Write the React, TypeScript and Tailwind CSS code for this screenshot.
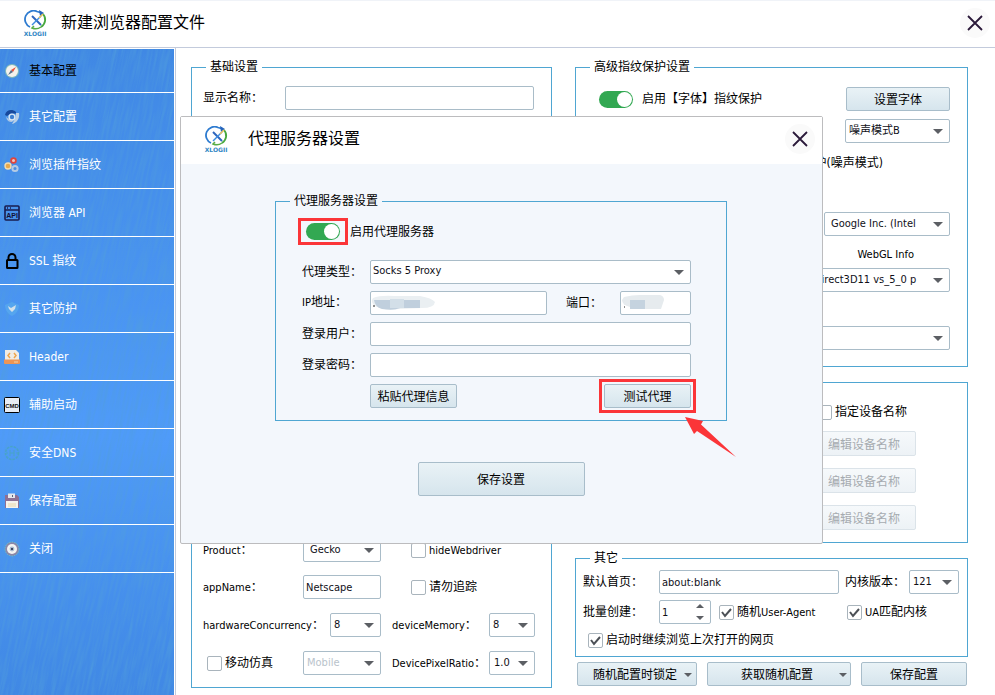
import type { ReactNode } from 'react';

const MENU = [
  { label: '基本配置', icon: 'compass' },
  { label: '其它配置', icon: 'browser' },
  { label: '浏览插件指纹', icon: 'gears' },
  { label: '浏览器 API', icon: 'api' },
  { label: 'SSL 指纹', icon: 'lock' },
  { label: '其它防护', icon: 'shield' },
  { label: 'Header', icon: 'header' },
  { label: '辅助启动', icon: 'cmd' },
  { label: '安全DNS', icon: 'dns' },
  { label: '保存配置', icon: 'floppy' },
  { label: '关闭', icon: 'close' },
];

function MenuIcon({ name }: { name: string }) {
  return (
    <svg viewBox="0 0 16 16" className="w-4 h-4 shrink-0" aria-hidden="true">
      {name === 'compass' && (
        <>
          <circle cx="8" cy="8" r="7" fill="#7fb9bd" />
          <circle cx="8" cy="8" r="6" fill="#f4f2ec" />
          <path d="M12 4L9 9L7 7z" fill="#e8503a" />
          <path d="M4 12L7 7L9 9z" fill="#56708c" />
        </>
      )}
      {name === 'browser' && (
        <>
          <path d="M1 6C2 1 8 -0.5 12 3L12 4.500H7L3 7z" fill="#17489c" />
          <path d="M12 4H15C16 9 13 14 8 15L11.500 9z" fill="#b9cfe6" />
          <path d="M2 8C3 12 5 13 8 13L10 11L5 10z" fill="#a9c4e4" />
          <circle cx="8" cy="8" r="3.600" fill="#dbe8f5" />
          <circle cx="8" cy="8" r="2.200" fill="#3d7fd2" />
        </>
      )}
      {name === 'gears' && (
        <>
          <circle cx="9.500" cy="3.500" r="2.400" fill="#f0c8c0" stroke="#e0453c" strokeWidth="1.800" />
          <circle cx="4" cy="9" r="3" fill="#e7a94c" stroke="#f4dcae" strokeWidth="1.400" />
          <circle cx="11" cy="11.500" r="2.600" fill="#4a8ce0" stroke="#b4cbe4" strokeWidth="2" />
        </>
      )}
      {name === 'api' && (
        <>
          <rect x="1" y="1" width="14" height="14" rx="1" fill="none" stroke="#191c4e" strokeWidth="1.600" />
          <path d="M1 5H15M3 3H4M6 3H7" stroke="#191c4e" strokeWidth="1.300" />
          <text x="8" y="13" textAnchor="middle" fontSize="7" fontWeight="700" fill="#120f34" fontFamily="Liberation Sans, sans-serif">API</text>
        </>
      )}
      {name === 'lock' && (
        <>
          <path d="M4.500 7V4.500a3.500 3.500 0 0 1 7 0V7" fill="none" stroke="#000" strokeWidth="2" />
          <rect x="3" y="7" width="10.500" height="8" rx="0.500" fill="none" stroke="#000" strokeWidth="2" />
        </>
      )}
      {name === 'shield' && (
        <>
          <path d="M8 1L15 4C15 9 12 13 8 15C4 13 1 9 1 4z" fill="#55a5ee" />
          <path d="M4 5L7 7L12 4L11 8L8 11L5 8z" fill="#d4e1ea" />
        </>
      )}
      {name === 'header' && (
        <>
          <path d="M1 1H12L15 4V12H1z" fill="#efece6" />
          <path d="M0 10.500H16V14a1 1 0 0 1-1 1H1a1 1 0 0 1-1-1z" fill="#ec9555" />
          <path d="M6 4L4 6.500L6 9M10 4L12 6.500L10 9" fill="none" stroke="#eea54c" strokeWidth="1.500" />
          <path d="M10 13H14" stroke="#f5d4a4" />
        </>
      )}
      {name === 'cmd' && (
        <>
          <rect x="0.500" y="0.500" width="15" height="15" rx="1" fill="#e8edf5" stroke="#000" />
          <text x="8" y="10.500" textAnchor="middle" fontSize="6" fontWeight="700" fill="#111" fontFamily="Liberation Sans, sans-serif">CMD</text>
        </>
      )}
      {name === 'dns' && (
        <>
          <circle cx="8" cy="8" r="6.500" fill="none" stroke="#48a3c8" strokeWidth="1.600" strokeDasharray="2.500 1" />
          <path d="M6 5V11M10 5V11M6 8H10M2 8H4M12 8H14" stroke="#48a3c8" />
        </>
      )}
      {name === 'floppy' && (
        <>
          <path d="M1 2H13L15 4V15H1z" fill="#8d7093" />
          <path d="M4 0.500H11V5H4z" fill="#e4e7ec" />
          <path d="M8 2H9V4H8z" fill="#59617a" />
          <path d="M2 8H14V15H2z" fill="#f5f3ee" />
          <path d="M4 11H12M4 13H12" stroke="#ecd9a8" />
        </>
      )}
      {name === 'close' && (
        <>
          <circle cx="8" cy="8" r="7" fill="#8b86a8" stroke="#6fc0c4" strokeDasharray="1.500 1" />
          <circle cx="8" cy="8" r="5" fill="#f4f4f2" />
          <circle cx="8" cy="8" r="2.400" fill="#a9b9cf" />
          <path d="M7 7L9 9M9 7L7 9" stroke="#3e4960" />
        </>
      )}
    </svg>
  );
}

function Logo() {
  return (
    <svg viewBox="-1 0 24 27" className="w-6 h-[27px] shrink-0" aria-hidden="true">
      <path d="M6 17A8.500 8.500 0 0 1 13 1.500L18 3" fill="none" stroke="#2d7bd0" strokeWidth="1.800" />
      <path d="M15 0L20 3L16 6z" fill="#2464bd" />
      <path d="M19 4A8.500 8.500 0 0 1 17 17" fill="none" stroke="#47a83f" strokeWidth="1.800" />
      <path d="M17 17A9 9 0 0 1 8 18L10 16" fill="none" stroke="#58ad46" strokeWidth="1.500" />
      <path d="M8 6L17 15" stroke="#2f66bd" strokeWidth="2" />
      <path d="M17 6L8 15" stroke="#3d8ce0" strokeWidth="1.500" />
      <path d="M15 8L19 4" stroke="#ecc258" strokeWidth="1.500" />
      <text x="11" y="26" textAnchor="middle" fontSize="6" fontWeight="700" fill="#2f86c4" fontFamily="DejaVu Sans, sans-serif">XLOGII</text>
    </svg>
  );
}

function CloseButton({ label }: { label: string }) {
  return (
    <button type="button" aria-label={label} className="w-[30px] h-[30px] rounded-full bg-[#fafafa] flex items-center justify-center">
      <svg viewBox="0 0 16 16" className="w-4 h-4" aria-hidden="true">
        <path d="M1 1L15 15M15 1L1 15" stroke="#2b1a3a" strokeWidth="1.800" />
      </svg>
    </button>
  );
}

function Group({ title, className = '', children }: { title?: string; className?: string; children: ReactNode }) {
  return (
    <fieldset className={`border border-[#4fa6d2] min-w-0 ${className}`}>
      {title && <legend className="ml-3.5 px-1 h-5 leading-5">{title}</legend>}
      {children}
    </fieldset>
  );
}

function Arrow({ className = '' }: { className?: string }) {
  return (
    <svg viewBox="0 0 10 5" className={`pointer-events-none ${className}`} aria-hidden="true">
      <path d="M0 0H10L5 5z" fill="#5c5f64" />
    </svg>
  );
}

type SelectProps = { value: string; label?: string; id?: string; className?: string; pad?: string; disabled?: boolean };

function Select({ value, label, id, className = '', pad = 'pl-1', disabled }: SelectProps) {
  return (
    <div className={`relative shrink-0 ${className}`}>
      <select
        id={id}
        aria-label={label}
        disabled={disabled}
        className={`block appearance-none w-full h-6 ${pad} rounded-[2px] border border-[#a9bcc8] bg-white text-[11px] text-[#101018] disabled:text-[#b9c3cb] disabled:opacity-100`}
      >
        <option>{value}</option>
      </select>
      <Arrow className="absolute right-[7px] top-2.5 w-2.5 h-[5px]" />
    </div>
  );
}

function Input({ id, value = '', type = 'text', className = '' }: { id: string; value?: string; type?: string; className?: string }) {
  return (
    <input
      id={id}
      type={type}
      defaultValue={value}
      className={`h-6 min-w-0 px-[2px] rounded-[2px] border border-[#a9bcc8] bg-white text-[11px] text-[#101018] ${className}`}
    />
  );
}

function Check({ checked = false, children }: { checked?: boolean; children: ReactNode }) {
  return (
    <label className="flex items-center gap-[3px] whitespace-nowrap">
      <span className="relative w-[15px] h-[15px]">
        <input
          type="checkbox"
          defaultChecked={checked}
          className="peer block appearance-none w-[15px] h-[15px] rounded-[2px] border border-[#a9b4bc] bg-white"
        />
        <svg viewBox="0 0 15 15" className="hidden peer-checked:block absolute inset-0 pointer-events-none" aria-hidden="true">
          <path d="M3 7L6 11L12 4" fill="none" stroke="#4c5056" strokeWidth="2" />
        </svg>
      </span>
      <span>{children}</span>
    </label>
  );
}

function Toggle({ id }: { id: string }) {
  return (
    <span className="relative block w-[34px] h-[17px] shrink-0">
      <input id={id} type="checkbox" role="switch" defaultChecked className="peer block appearance-none w-full h-full rounded-full bg-[#a9b4bc] checked:bg-[#32a852]" />
      <span className="absolute top-px left-px peer-checked:left-[18px] w-[15px] h-[15px] rounded-full bg-white pointer-events-none" />
    </span>
  );
}

function PushButton({ className = '', disabled, children }: { className?: string; disabled?: boolean; children: ReactNode }) {
  return (
    <button
      type="button"
      disabled={disabled}
      className={`relative shrink-0 pt-0.5 rounded-[2px] border border-[#a8bdca] bg-linear-to-b from-[#e9f2f6] to-[#d6e5ed] disabled:border-[#dbe3e9] disabled:from-[#f6f9fb] disabled:to-[#edf2f6] disabled:text-[#a6abb0] ${className}`}
    >
      {children}
    </button>
  );
}

/* Latin words sit one step smaller than the Chinese around them */
const Latin = ({ children }: { children: ReactNode }) => <span className="text-[11px]">{children}</span>;

function Sidebar() {
  return (
    <aside className="relative w-[174px] shrink-0 bg-linear-to-b from-[#4088e4] via-[#4f9bf9] via-60% to-[#4088e4]">
      <svg className="absolute inset-0 w-full h-full" aria-hidden="true">
        <filter id="grain" x="0" y="0" width="100%" height="100%">
          <feTurbulence type="fractalNoise" baseFrequency="0.4 0.03" numOctaves="2" seed="4" />
          <feColorMatrix values="0 0 0 0 0.08  0 0 0 0 0.34  0 0 0 0 0.72  1.3 0 0 0 -0.5" />
        </filter>
        <g transform="rotate(12)">
          <rect x="-20" y="-60" width="420" height="900" filter="url(#grain)" />
        </g>
      </svg>
      <nav className="relative border-t border-white">
        {MENU.map((item, i) => (
          <a
            key={item.label}
            href="#"
            className={`flex items-center gap-[9px] pl-1 border-b border-white ${i === 0 ? 'h-11 text-black' : 'h-12 text-white'}`}
          >
            <MenuIcon name={item.icon} />
            <span>{item.label}</span>
          </a>
        ))}
      </nav>
    </aside>
  );
}

function BasicSettings() {
  return (
    <Group title="基础设置" className="flex flex-col">
      <div className="flex items-center h-8 mt-[5px] pl-[11px] pr-[17px]">
        <label htmlFor="name" className="w-[82px] shrink-0">显示名称：</label>
        <Input id="name" className="flex-1" />
      </div>
      <div className="mt-auto pl-[11px] pr-[17px] pb-[5px]">
        <div className="flex items-center h-9">
          <label htmlFor="product" className="w-[100px] shrink-0"><Latin>Product</Latin>：</label>
          <Select id="product" value="Gecko" className="w-[78px]" pad="pl-1.5" />
          <div className="ml-[30px]"><Check><Latin>hideWebdriver</Latin></Check></div>
        </div>
        <div className="flex items-center h-[38px]">
          <label htmlFor="app" className="w-[100px] shrink-0"><Latin>appName</Latin>：</label>
          <Input id="app" value="Netscape" className="w-[78px]" />
          <div className="ml-[30px]"><Check>请勿追踪</Check></div>
        </div>
        <div className="flex items-center h-[38px] whitespace-nowrap">
          <label htmlFor="hw" className="w-[127px] shrink-0"><Latin>hardwareConcurrency</Latin>：</label>
          <Select id="hw" value="8" className="w-[51px]" pad="pl-[3px]" />
          <label htmlFor="mem" className="ml-[11px] w-[97px] shrink-0"><Latin>deviceMemory</Latin>：</label>
          <Select id="mem" value="8" className="w-[46px]" pad="pl-[3px]" />
        </div>
        <div className="flex items-center h-[38px] whitespace-nowrap">
          <div className="w-[96px] ml-1 shrink-0"><Check>移动仿真</Check></div>
          <Select label="移动仿真" value="Mobile" className="w-[78px]" pad="pl-[3px]" disabled />
          <label htmlFor="ratio" className="ml-[11px] w-[97px] shrink-0"><Latin>DevicePixelRatio</Latin>：</label>
          <Select id="ratio" value="1.0" className="w-[46px]" pad="pl-1" />
        </div>
      </div>
    </Group>
  );
}

function FingerprintSettings() {
  return (
    <Group title="高级指纹保护设置">
      <div className="pt-1.5 pb-4 pr-[17px] flex flex-col items-end">
        <div className="flex items-center w-full h-8 pl-[23px]">
          <Toggle id="font" />
          <label htmlFor="font" className="ml-[9px]">启用【字体】指纹保护</label>
          <PushButton className="ml-auto w-[104px] h-6">设置字体</PushButton>
        </div>
        <div className="flex items-center h-8">
          <Select label="噪声模式" value="噪声模式B" className="w-[105px]" pad="pl-[3px]" />
        </div>
        <div className="h-8 leading-8 pr-[67px]">护(噪声模式)</div>
        <div className="flex items-center h-8 mt-[29px]">
          <Select label="WebGL 厂商" value="Google Inc. (Intel" className="w-[126px]" pad="pl-1.5" />
        </div>
        <div className="h-7 leading-7 pr-9"><Latin>WebGL Info</Latin></div>
        <Select label="WebGL Info" value="Direct3D11 vs_5_0 p" className="w-[137px]" pad="pl-0" />
        <Select label="WebGL" value="" className="w-[137px] mt-[34px]" />
      </div>
    </Group>
  );
}

function DeviceSettings() {
  return (
    <Group className="mt-[15px]">
      <div className="pt-[13px] pb-3 pr-[51px] flex flex-col items-end">
        <div className="flex items-center h-8 pr-[9px]"><Check>指定设备名称</Check></div>
        <div className="mt-[3px] flex flex-col gap-3">
          <PushButton className="w-[104px] h-[25px]" disabled>编辑设备名称</PushButton>
          <PushButton className="w-[104px] h-[25px]" disabled>编辑设备名称</PushButton>
          <PushButton className="w-[104px] h-[25px]" disabled>编辑设备名称</PushButton>
        </div>
      </div>
    </Group>
  );
}

function OtherSettings() {
  return (
    <Group title="其它" className="mt-[5px]">
      <div className="pl-[7px] pr-2 pb-1">
        <div className="flex items-center h-7">
          <label htmlFor="home" className="w-[76px] shrink-0">默认首页：</label>
          <Input id="home" value="about:blank" className="flex-1" />
          <label htmlFor="core" className="ml-1.5 w-16 shrink-0">内核版本：</label>
          <Select id="core" value="121" className="w-[50px]" pad="pl-[3px]" />
        </div>
        <div className="flex items-center h-8">
          <label htmlFor="batch" className="w-[76px] shrink-0">批量创建：</label>
          <div className="relative shrink-0">
            <Input id="batch" value="1" className="w-[52px] block" />
            <div className="absolute right-[7px] top-1 flex flex-col gap-2 pointer-events-none">
              <svg viewBox="0 0 8 4" className="w-2 h-1" aria-hidden="true"><path d="M0 4H8L4 0z" fill="#5c5f64" /></svg>
              <svg viewBox="0 0 8 4" className="w-2 h-1" aria-hidden="true"><path d="M0 0H8L4 4z" fill="#5c5f64" /></svg>
            </div>
          </div>
          <div className="ml-2"><Check checked>随机<Latin>User-Agent</Latin></Check></div>
          <div className="ml-auto pr-8"><Check checked><Latin>UA</Latin>匹配内核</Check></div>
        </div>
        <div className="flex items-center h-6 pl-[5px]"><Check checked>启动时继续浏览上次打开的网页</Check></div>
      </div>
    </Group>
  );
}

function ProxyDialog() {
  return (
    <div role="dialog" aria-labelledby="proxy-title" className="absolute left-[180px] top-[116px] w-[643px] border border-[#bcbcbe] rounded-[2px] bg-[#f3f7fc]">
      <div className="h-[47px] bg-white flex items-center pl-[23px] pr-[7px] pb-[3px]">
        <Logo />
        <h2 id="proxy-title" className="ml-5 text-base">代理服务器设置</h2>
        <div className="ml-auto"><CloseButton label="关闭代理服务器设置" /></div>
      </div>
      <div className="pl-[94px] pr-[95px] pt-[27px] pb-[47px]">
        <Group title="代理服务器设置">
          <div className="pt-[7px] pb-[9px] pl-[26px] pr-[35px]">
            <div className="flex items-center gap-0.5 mb-[11px] ml-[-4px]">
              <div className="border-[3px] border-[#fb3538] w-[50px] h-[27px] flex items-center justify-center">
                <Toggle id="proxy" />
              </div>
              <label htmlFor="proxy">启用代理服务器</label>
            </div>
            <div className="flex items-center h-[31px]">
              <label htmlFor="type" className="w-[68px] shrink-0">代理类型：</label>
              <Select id="type" value="Socks 5 Proxy" className="flex-1" pad="pl-[2px]" />
            </div>
            <div className="flex items-center h-[31px]">
              <label htmlFor="ip" className="w-[68px] shrink-0"><Latin>IP</Latin>地址：</label>
              <div className="relative flex-1 flex">
                <Input id="ip" className="w-full" />
                <svg viewBox="0 0 66 16" className="absolute left-0 top-1 w-[66px] h-4 pointer-events-none" aria-hidden="true">
                  <path d="M3 3Q10 0 25 1H50Q62 3 65 7Q64 13 52 13L28 14Q14 16 5 11Q0 7 3 3z" fill="#eaeff2" />
                  <path d="M4 5H50V13H30Q24 16 12 14Q5 12 4 5z" fill="#c0cfdd" />
                  <path d="M20 4H34V13H20z" fill="#d3dfe8" />
                  <path d="M3 11H5" stroke="#222" />
                </svg>
              </div>
              <label htmlFor="port" className="ml-[19px] w-[54px] shrink-0">端口：</label>
              <div className="relative flex">
                <Input id="port" className="w-[71px]" />
                <svg viewBox="0 0 44 16" className="absolute left-0.5 top-1 w-11 h-4 pointer-events-none" aria-hidden="true">
                  <path d="M2 2Q10 0 18 0H38Q42 1 42 5L39 14H24L8 12Q0 10 0 5z" fill="#e6ebee" />
                  <path d="M8 5H23V14H8z" fill="#c5d3df" />
                  <path d="M2 12H3" stroke="#222" />
                </svg>
              </div>
            </div>
            <div className="flex items-center h-[31px]">
              <label htmlFor="user" className="w-[68px] shrink-0">登录用户：</label>
              <Input id="user" className="flex-1" />
            </div>
            <div className="flex items-center h-[31px]">
              <label htmlFor="pass" className="w-[68px] shrink-0">登录密码：</label>
              <Input id="pass" type="password" className="flex-1" />
            </div>
            <div className="flex items-center justify-between h-[31px] pl-[68px]">
              <PushButton className="w-[87px] h-6">粘贴代理信息</PushButton>
              <div className="relative">
                <PushButton className="block w-[87px] h-6">测试代理</PushButton>
                <span className="absolute -inset-[5px] border-[3px] border-[#fb3538] pointer-events-none" />
                <svg viewBox="0 0 52 42" className="absolute left-[81px] top-[33px] w-[52px] h-[42px] pointer-events-none" aria-hidden="true">
                  <path d="M0 0L18 4L16 7.500L51 40L12 14L9 17z" fill="#fb3538" />
                </svg>
              </div>
            </div>
          </div>
        </Group>
        <PushButton className="block mx-auto mt-[41px] w-[167px] h-[34px]">保存设置</PushButton>
      </div>
    </div>
  );
}

export default function App() {
  return (
    <div className="relative min-h-screen flex flex-col bg-white text-black text-xs font-['DejaVu_Sans_Condensed','Noto_Sans_CJK_SC',sans-serif]">
      <header className="h-12 shrink-0 flex items-center pl-[23px] pr-[5px] pb-0.5 border-t border-b border-t-[#f0f3f8] border-b-[#c3cbdc]">
        <Logo />
        <h1 className="ml-3.5 text-base">新建浏览器配置文件</h1>
        <div className="ml-auto"><CloseButton label="关闭窗口" /></div>
      </header>
      <div className="flex flex-1">
        <Sidebar />
        <main className="flex-1 ml-px border-l border-[#c3cbdc] grid grid-cols-[361fr_393fr] gap-x-[23px] pt-[9px] pb-[7px] pl-[15px] pr-[27px]">
          <BasicSettings />
          <div className="min-w-0">
            <FingerprintSettings />
            <DeviceSettings />
            <OtherSettings />
            <div className="mt-[5px] pl-0.5 pr-px flex gap-2.5">
              <PushButton className="w-[120px] h-6 pr-1">
                随机配置时锁定
                <Arrow className="absolute right-1 top-2.5 w-2 h-1" />
              </PushButton>
              <PushButton className="flex-1 h-6 pr-1">
                获取随机配置
                <Arrow className="absolute right-[3px] top-2.5 w-2 h-1" />
              </PushButton>
              <PushButton className="w-[106px] h-6">保存配置</PushButton>
            </div>
          </div>
        </main>
      </div>
      <ProxyDialog />
    </div>
  );
}
